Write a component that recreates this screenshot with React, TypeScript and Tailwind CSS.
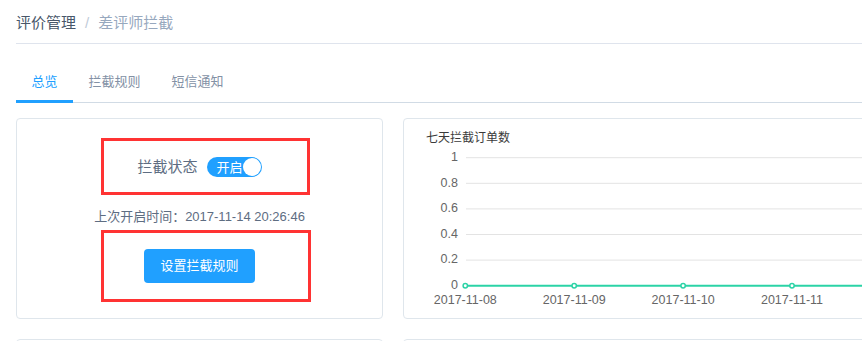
import React from 'react';

const FONT = '"Liberation Sans", "Noto Sans CJK SC", sans-serif';

const tabs = ['总览', '拦截规则', '短信通知'];
const days = ['2017-11-08', '2017-11-09', '2017-11-10', '2017-11-11'];
const yTicks = ['0', '0.2', '0.4', '0.6', '0.8', '1'];

const Toggle: React.FC<{ on: boolean }> = ({ on }) => (
  <div className="w-[55px] h-[20px] rounded-full bg-[#20a0ff] flex items-center pl-[10px] pr-[1px] justify-between">
    <span className="text-white text-[13px] leading-none">{on ? '开启' : '关闭'}</span>
    <span className="w-[18px] h-[18px] rounded-full bg-white" />
  </div>
);

// line chart, only the part that fits in the window is drawn
const Chart: React.FC = () => {
  const y0 = 166.7;
  const step = 25.6;
  const x0 = 61.3;
  const xs = 108.9;
  return (
    <svg width="459" height="199" className="block" style={{ fontFamily: FONT }}>
      <text x="22" y="23" fontSize="12" fill="#3a3a3a">七天拦截订单数</text>
      {yTicks.map((t, i) => {
        const y = y0 - i * step;
        return (
          <g key={t}>
            {i > 0 && <line x1="62" x2="459" y1={y} y2={y} stroke="#e3e3e3" strokeWidth="1" />}
            <text x="54" y={y} fontSize="12.5" fill="#666" textAnchor="end" dominantBaseline="middle">{t}</text>
          </g>
        );
      })}
      <line x1={x0} x2="459" y1={y0} y2={y0} stroke="#2bd3a6" strokeWidth="2" />
      {days.map((d, i) => (
        <g key={d}>
          <circle cx={x0 + i * xs} cy={y0} r="2.2" fill="#fff" stroke="#2bd3a6" strokeWidth="1.5" />
          <text x={x0 + i * xs} y="181.5" fontSize="12.5" fill="#666" textAnchor="middle" dominantBaseline="middle">{d}</text>
        </g>
      ))}
    </svg>
  );
};

export default function App() {
  return (
    <div className="w-[862px] h-[341px] overflow-hidden bg-white" style={{ fontFamily: FONT }}>
      <div className="w-[1400px] pl-[16px]">
        <div className="pt-[14px] pb-[11px] border-b border-[#dfe4ed] flex items-center text-[15px] leading-[18px]">
          <span className="text-[#48576a]">评价管理</span>
          <span className="mx-[9px] text-[#bfcbd9]">/</span>
          <span className="text-[#97a8be]">差评师拦截</span>
        </div>

        <div className="mt-[17px] flex border-b border-[#d1dbe5]">
          {tabs.map((t, i) => (
            <div
              key={t}
              className={`relative h-[41px] leading-[41px] px-[15.5px] text-[13px] ${i === 0 ? 'text-[#20a0ff]' : 'text-[#8391a5]'}`}
            >
              {t}
              {i === 0 && <span className="absolute left-0 right-0 bottom-[-1px] h-[3px] bg-[#20a0ff]" />}
            </div>
          ))}
        </div>

        <div className="mt-[15px] grid grid-cols-[367px_900px] gap-x-[19.5px] gap-y-[20px]">
          <div className="relative h-[201px] border border-[#dfe6ec] rounded-[4px] flex flex-col items-center pt-[38px]">
            <div className="flex items-center h-[20px]">
              <span className="text-[15px] text-[#5e6d82] mr-[9px]">拦截状态</span>
              <Toggle on />
            </div>
            <div className="mt-[31px] text-[13px] leading-[18px] text-[#5e6d82]">上次开启时间：2017-11-14 20:26:46</div>
            <button className="mt-[23px] h-[34px] px-[16px] rounded-[4px] bg-[#20a0ff] text-white text-[13px]">
              设置拦截规则
            </button>
            <div className="absolute left-[84px] top-[19px] w-[209px] h-[57px] border-[3px] border-[#f33]" />
            <div className="absolute left-[84px] top-[111px] w-[210px] h-[72px] border-[3px] border-[#f33]" />
          </div>

          <div className="h-[201px] border border-[#dfe6ec] rounded-[4px] overflow-hidden">
            <Chart />
          </div>

          <div className="h-[200px] border border-[#dfe6ec] rounded-[4px]" />
          <div className="h-[200px] border border-[#dfe6ec] rounded-[4px]" />
        </div>
      </div>
    </div>
  );
}
